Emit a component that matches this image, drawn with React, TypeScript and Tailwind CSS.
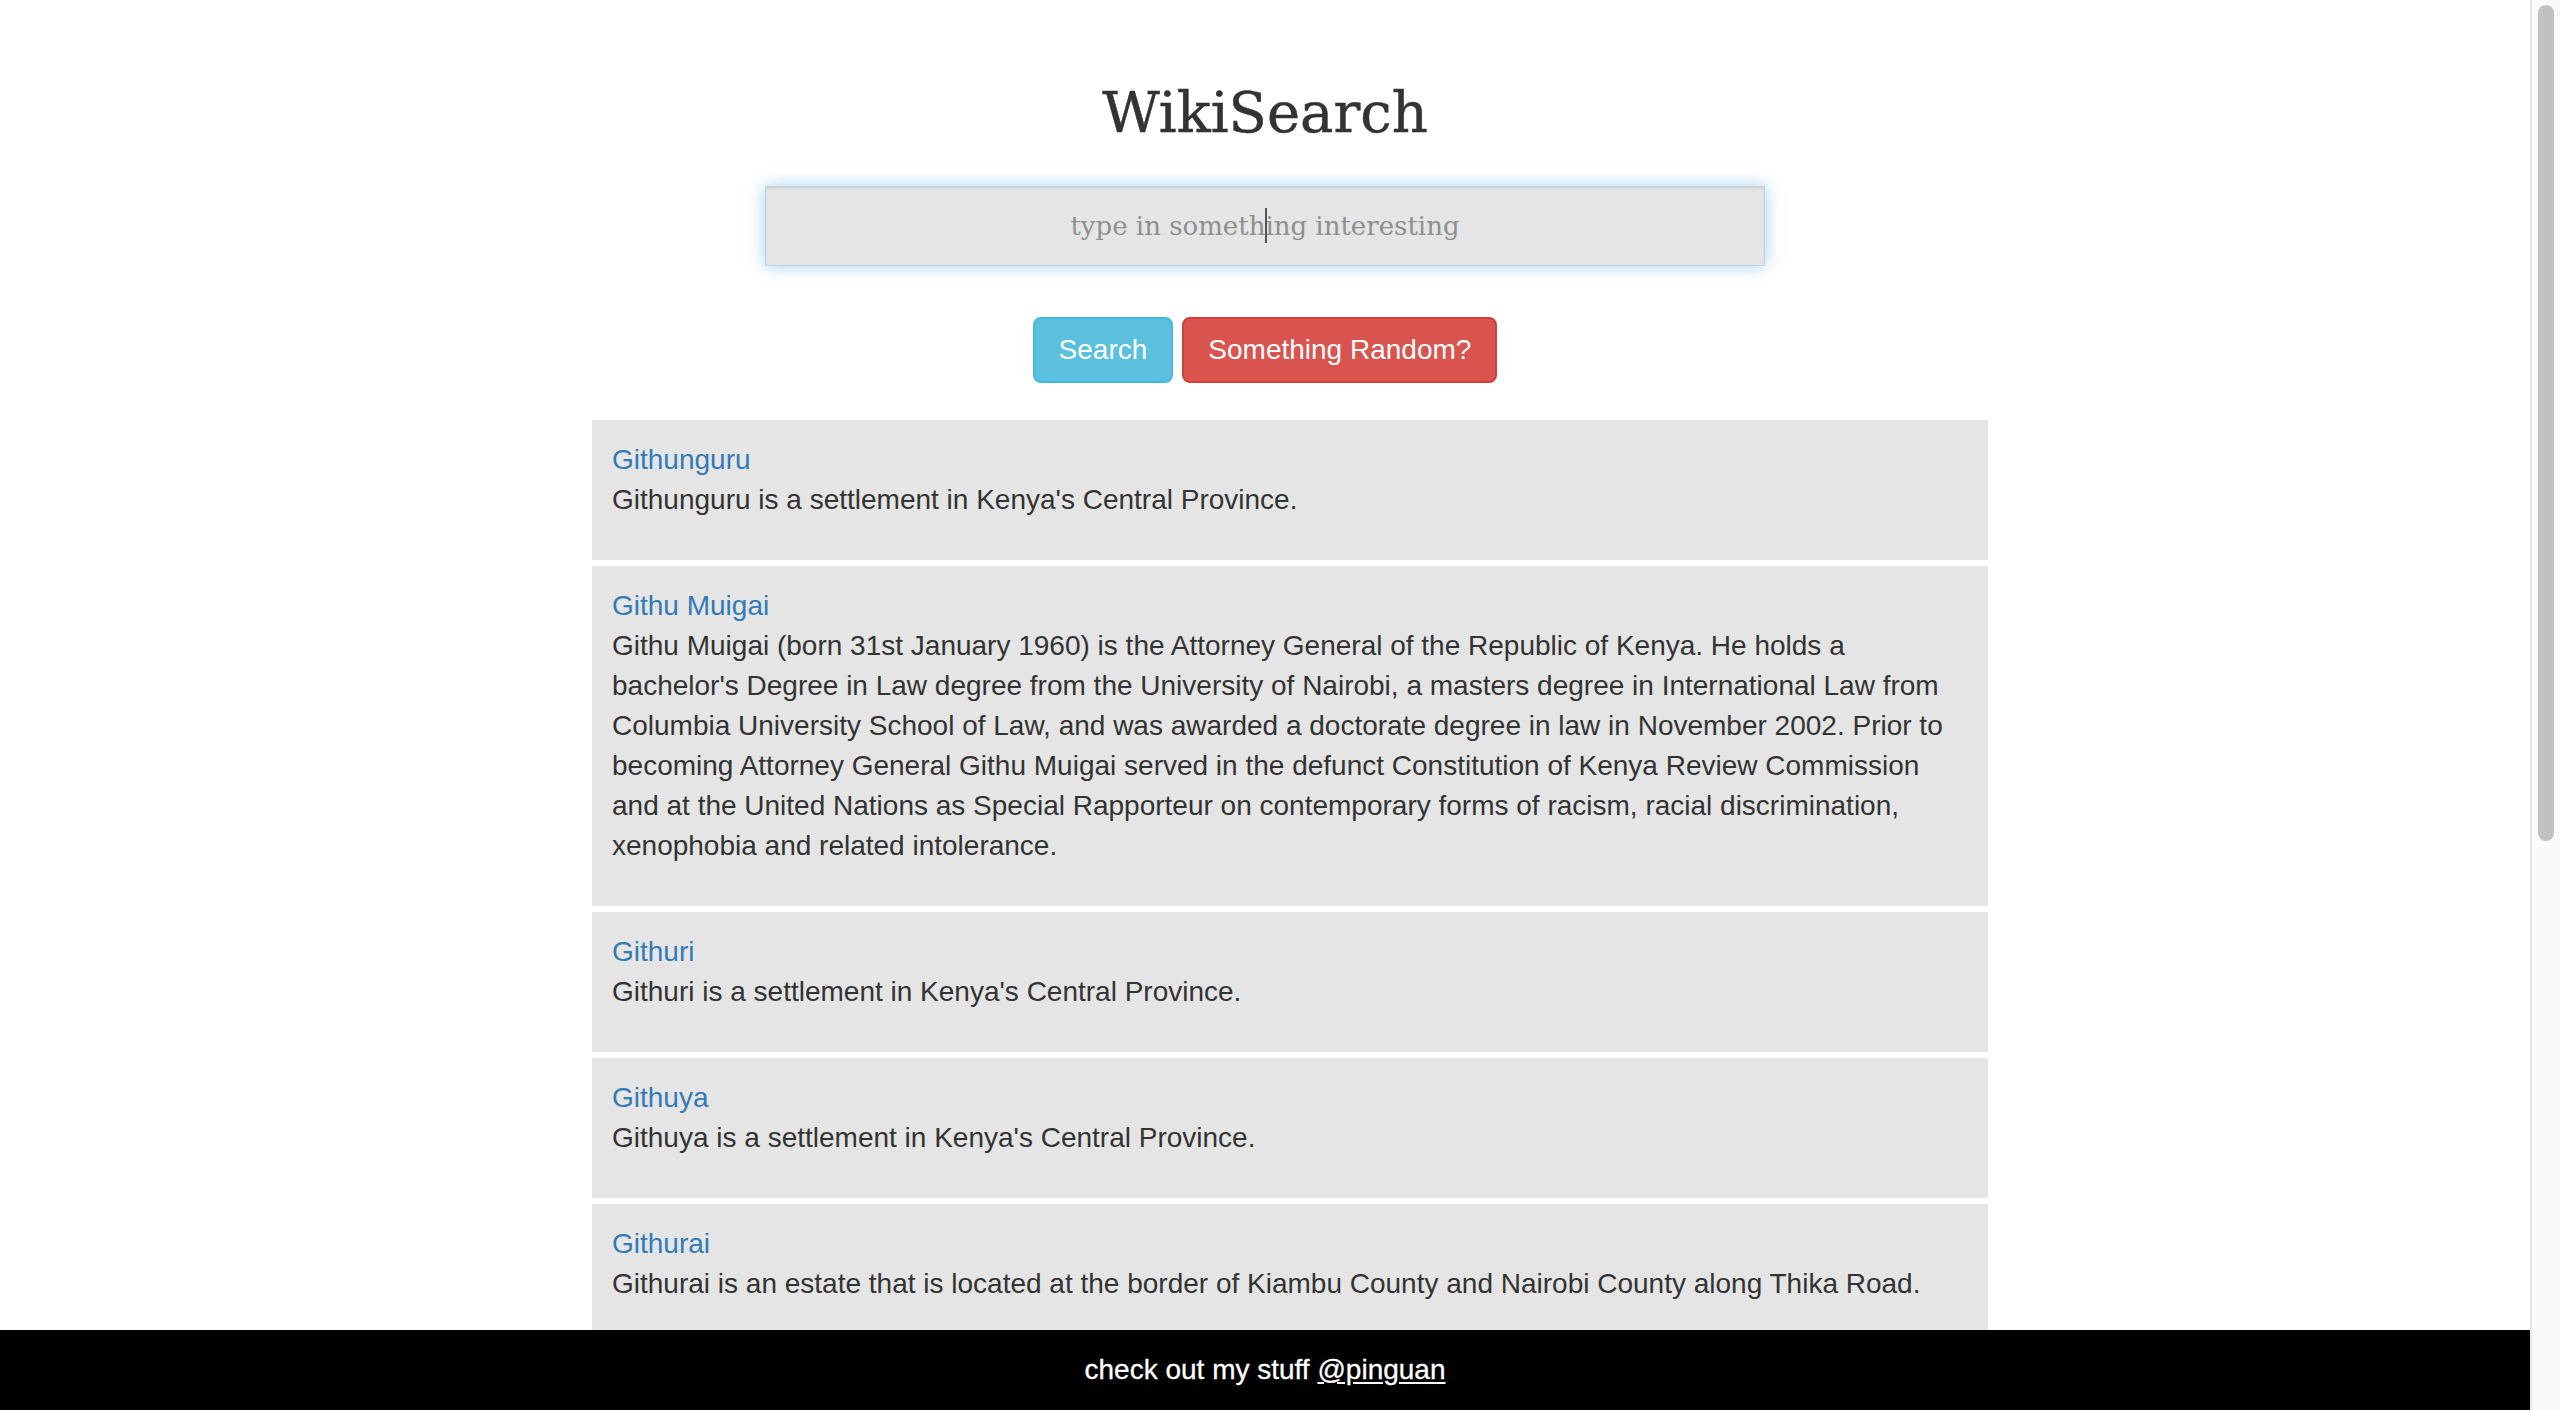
import { useState } from "react";

const results = [
  {
    title: "Githunguru",
    extract: "Githunguru is a settlement in Kenya's Central Province.",
  },
  {
    title: "Githu Muigai",
    extract:
      "Githu Muigai (born 31st January 1960) is the Attorney General of the Republic of Kenya. He holds a bachelor's Degree in Law degree from the University of Nairobi, a masters degree in International Law from Columbia University School of Law, and was awarded a doctorate degree in law in November 2002. Prior to becoming Attorney General Githu Muigai served in the defunct Constitution of Kenya Review Commission and at the United Nations as Special Rapporteur on contemporary forms of racism, racial discrimination, xenophobia and related intolerance.",
  },
  {
    title: "Githuri",
    extract: "Githuri is a settlement in Kenya's Central Province.",
  },
  {
    title: "Githuya",
    extract: "Githuya is a settlement in Kenya's Central Province.",
  },
  {
    title: "Githurai",
    extract:
      "Githurai is an estate that is located at the border of Kiambu County and Nairobi County along Thika Road.",
  },
];

function ResultCard({ title, extract }: { title: string; extract: string }) {
  return (
    <div className="bg-[#e5e5e5] px-[20px] pt-[20px] pb-[20px]">
      <a href="#" className="block text-[#337ab7] leading-[40px]">
        {title}
      </a>
      <p className="mb-[20px] leading-[40px] text-[#333]">{extract}</p>
    </div>
  );
}

export default function App() {
  const [query, setQuery] = useState("");

  return (
    <div className="flex h-screen bg-white font-['Liberation_Sans',Arial,sans-serif] text-[28px] text-[#333]">
      <div className="flex-1 overflow-y-auto [scrollbar-width:none]">
        <div className="min-h-[4100px] pt-[80px]">
          {/* Header */}
          <h1 className="text-center font-['DejaVu_Serif',serif] text-[56px] leading-[66px] text-[#333] [-webkit-text-stroke:0.5px_#333]">
            WikiSearch
          </h1>

          {/* Search input */}
          <div className="relative mx-auto mt-[40px] w-[1000px]">
            <input
              value={query}
              onChange={(e) => setQuery(e.target.value)}
              placeholder="type in something interesting"
              className="block h-[80px] w-full border border-[#bcd3e8] bg-[#e5e5e5] text-center font-['DejaVu_Serif',serif] text-[26px] text-[#555] placeholder:text-[#8f8f8f] outline-none shadow-[inset_0_2px_2px_rgba(0,0,0,0.075),0_0_16px_rgba(102,175,233,0.6)]"
            />
            {query === "" && (
              <span className="pointer-events-none absolute left-1/2 top-[22px] h-[35px] w-[2px] bg-[#555]" />
            )}
          </div>

          {/* Buttons */}
          <div className="mt-[51px] flex justify-center gap-[9px]">
            <button className="h-[66px] rounded-[8px] border-2 border-[#46b8da] bg-[#5bc0de] px-[24px] text-white">
              Search
            </button>
            <button className="h-[66px] rounded-[8px] border-2 border-[#d43f3a] bg-[#d9534f] px-[24px] text-white">
              Something Random?
            </button>
          </div>

          {/* Results */}
          <div className="mx-auto mt-[37px] flex w-[1446px] flex-col gap-[6px] pl-[50px]">
            {results.map((r) => (
              <ResultCard key={r.title} title={r.title} extract={r.extract} />
            ))}
          </div>
        </div>

        <footer className="fixed bottom-0 left-0 right-[30px] flex h-[80px] items-center justify-center bg-black text-white [-webkit-text-stroke:0.3px_#fff]">
          <span>
            check out my stuff{" "}
            <a href="#" className="underline underline-offset-[3px]">
              @pinguan
            </a>
          </span>
        </footer>
      </div>

      {/* Scrollbar */}
      <div className="w-[30px] shrink-0 border-l-2 border-[#e8e8e8] bg-[#fafafa] px-[6px] pt-[5px]">
        <div className="h-[836px] rounded-full bg-[#c1c1c1]" />
      </div>
    </div>
  );
}
